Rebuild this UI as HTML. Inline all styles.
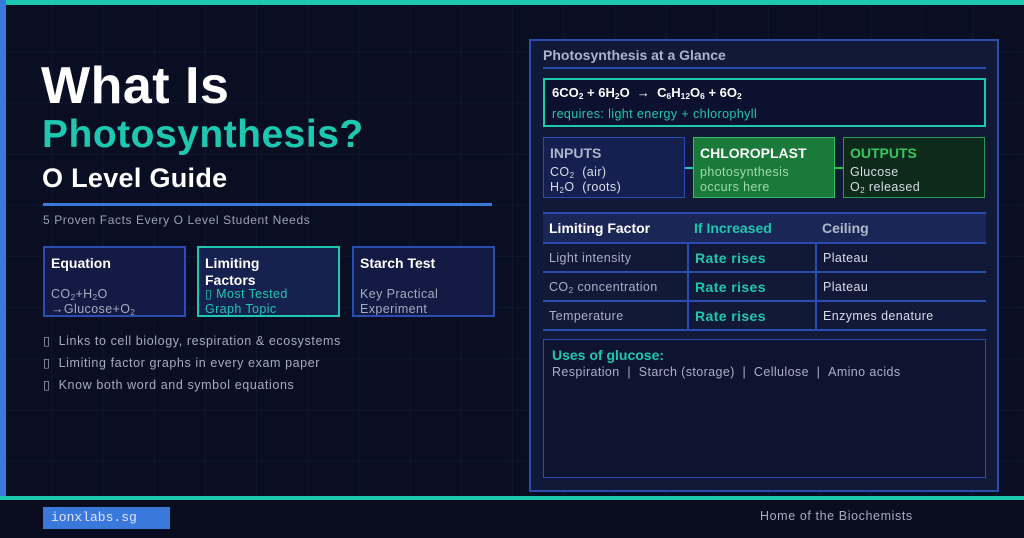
<!DOCTYPE html>
<html><head><meta charset="utf-8"><style>
*{margin:0;padding:0;box-sizing:border-box}
body{width:1024px;height:538px;overflow:hidden;background:#0a0e22;font-family:"Liberation Sans",sans-serif;position:relative;color:#fff}
.grid{position:absolute;left:0;top:0;width:1024px;height:497px;background-image:linear-gradient(to right,rgba(40,55,120,.2) 1px,transparent 1px),linear-gradient(to bottom,rgba(40,55,120,.2) 1px,transparent 1px);background-size:51.2px 51.2px}
.a{position:absolute}
.box{position:absolute;border:2px solid #2c4db0;background:#131a44}
sub{font-size:65%;vertical-align:-2px;line-height:0}
.mono{font-family:"Liberation Mono",monospace}
td{padding:0 6px}
.ls{letter-spacing:.4px}
</style></head><body>
<div class="grid"></div>
<div class="a" style="left:0;top:0;width:1024px;height:5px;background:#1ec8b0"></div>
<div class="a" style="left:0;top:0;width:6px;height:497px;background:#3a78dc"></div>
<div class="a" style="left:0;top:496px;width:1024px;height:4px;background:#1ec8b0"></div>
<div class="a" style="left:0;top:500px;width:1024px;height:38px;background:#0a0d20"></div>

<div class="a" style="left:41px;top:56px;font-size:52px;font-weight:bold;line-height:60px;letter-spacing:.5px">What Is</div>
<div class="a" style="left:42px;top:112px;font-size:39px;font-weight:bold;color:#1ec8b0;line-height:46px;letter-spacing:.5px">Photosynthesis?</div>
<div class="a" style="left:42px;top:161px;font-size:27px;font-weight:bold;line-height:34px;letter-spacing:.3px">O Level Guide</div>
<div class="a" style="left:43px;top:203px;width:449px;height:3px;background:#3a78dc"></div>
<div class="a" style="left:43px;top:213px;font-size:12px;color:#9aa2b8;letter-spacing:.6px">5 Proven Facts Every O Level Student Needs</div>

<div class="box" style="left:43px;top:246px;width:143px;height:71px"></div>
<div class="a" style="left:51px;top:255px;font-size:14px;font-weight:bold">Equation</div>
<div class="a ls" style="left:51px;top:287px;font-size:12.5px;color:#a5abc0;line-height:15px">CO<sub>2</sub>+H<sub>2</sub>O<br>→Glucose+O<sub>2</sub></div>
<div class="box" style="left:197px;top:246px;width:143px;height:71px;border-color:#1ec8b0;background:#17214f"></div>
<div class="a" style="left:205px;top:255px;font-size:14px;font-weight:bold;line-height:17px">Limiting<br>Factors</div>
<div class="a ls" style="left:205px;top:287px;font-size:12.5px;color:#1ec8b0;line-height:15px;height:28px;overflow:hidden">▯ Most Tested<br>Graph Topic</div>
<div class="box" style="left:352px;top:246px;width:143px;height:71px"></div>
<div class="a" style="left:360px;top:255px;font-size:14px;font-weight:bold">Starch Test</div>
<div class="a ls" style="left:360px;top:287px;font-size:12.5px;color:#a5abc0;line-height:15px;height:28px;overflow:hidden">Key Practical<br>Experiment</div>

<div class="a" style="left:43px;top:330px;font-size:12.5px;color:#a5abc0;line-height:22px;letter-spacing:.6px">▯&nbsp; Links to cell biology, respiration &amp; ecosystems<br>▯&nbsp; Limiting factor graphs in every exam paper<br>▯&nbsp; Know both word and symbol equations</div>

<div class="a mono" style="left:43px;top:507px;width:127px;height:22px;background:#3a78dc;color:#dde6ff;font-size:13px;padding:3px 8px">ionxlabs.sg</div>
<div class="a" style="left:760px;top:509px;font-size:12.5px;color:#a5abc0;letter-spacing:.6px">Home of the Biochemists</div>

<!-- right panel -->
<div class="a" style="left:529px;top:39px;width:470px;height:453px;border:2px solid #2c4db0;background:#111838"></div>
<div class="a" style="left:543px;top:47px;font-size:14px;font-weight:bold;color:#aab4cc">Photosynthesis at a Glance</div>
<div class="a" style="left:543px;top:67px;width:443px;height:2px;background:#2c4db0"></div>
<div class="a" style="left:543px;top:78px;width:443px;height:49px;border:2px solid #1ec8b0;background:#0c1130"></div>
<div class="a" style="left:552px;top:85px;font-size:13px;font-weight:bold">6CO<sub>2</sub> + 6H<sub>2</sub>O &nbsp;→&nbsp; C<sub>6</sub>H<sub>12</sub>O<sub>6</sub> + 6O<sub>2</sub></div>
<div class="a ls" style="left:552px;top:107px;font-size:12.5px;color:#1ec8b0">requires: light energy + chlorophyll</div>

<div class="a" style="left:543px;top:137px;width:142px;height:61px;border:1.5px solid #2c4db0;background:#152050"></div>
<div class="a" style="left:550px;top:145px;font-size:14px;font-weight:bold;color:#aab4cc">INPUTS</div>
<div class="a ls" style="left:550px;top:165px;font-size:12.5px;color:#d8dce8;line-height:15px">CO<sub>2</sub>&nbsp; (air)<br>H<sub>2</sub>O&nbsp; (roots)</div>
<div class="a" style="left:685px;top:167px;width:8px;height:2px;background:#1ec8b0"></div>
<div class="a" style="left:693px;top:137px;width:142px;height:61px;border:1.5px solid #2fc060;background:#1a7a3a"></div>
<div class="a" style="left:700px;top:145px;font-size:14px;font-weight:bold">CHLOROPLAST</div>
<div class="a ls" style="left:700px;top:165px;font-size:12.5px;color:#a0d8b0;line-height:15px">photosynthesis<br>occurs here</div>
<div class="a" style="left:835px;top:167px;width:8px;height:2px;background:#2fc060"></div>
<div class="a" style="left:843px;top:137px;width:142px;height:61px;border:1.5px solid #2a9a50;background:#0e2a1a"></div>
<div class="a" style="left:850px;top:145px;font-size:14px;font-weight:bold;color:#34c860">OUTPUTS</div>
<div class="a ls" style="left:850px;top:165px;font-size:12.5px;color:#d8dce8;line-height:15px">Glucose<br>O<sub>2</sub> released</div>

<table class="a" style="left:543px;top:212px;width:443px;border-collapse:collapse;font-size:12.5px;letter-spacing:.4px">
<tr style="height:30px;background:#1a2656;border-top:2px solid #2c4db0;border-bottom:2px solid #2c4db0;font-size:14px;font-weight:bold;letter-spacing:0"><td style="width:145px">Limiting Factor</td><td style="width:128px;color:#1ec8b0">If Increased</td><td style="color:#b0b8cc">Ceiling</td></tr>
<tr style="height:29px;border-bottom:2px solid #2c4db0"><td style="color:#aab0c4">Light intensity</td><td style="border-left:2px solid #2c4db0;border-right:2px solid #2c4db0;color:#1ec8b0;font-weight:bold;font-size:14px">Rate rises</td><td style="color:#d8dce8">Plateau</td></tr>
<tr style="height:29px;border-bottom:2px solid #2c4db0"><td style="color:#aab0c4">CO<sub>2</sub> concentration</td><td style="border-left:2px solid #2c4db0;border-right:2px solid #2c4db0;color:#1ec8b0;font-weight:bold;font-size:14px">Rate rises</td><td style="color:#d8dce8">Plateau</td></tr>
<tr style="height:29px;border-bottom:2px solid #2c4db0"><td style="color:#aab0c4">Temperature</td><td style="border-left:2px solid #2c4db0;border-right:2px solid #2c4db0;color:#1ec8b0;font-weight:bold;font-size:14px">Rate rises</td><td style="color:#d8dce8">Enzymes denature</td></tr>
</table>

<div class="a" style="left:543px;top:339px;width:443px;height:139px;border:1.5px solid #2c4db0;background:#0e1330"></div>
<div class="a" style="left:552px;top:347px;font-size:14px;font-weight:bold;color:#1ec8b0">Uses of glucose:</div>
<div class="a ls" style="left:552px;top:365px;font-size:12.5px;color:#aab0c4">Respiration &nbsp;| &nbsp;Starch (storage) &nbsp;| &nbsp;Cellulose &nbsp;| &nbsp;Amino acids</div>
</body></html>
